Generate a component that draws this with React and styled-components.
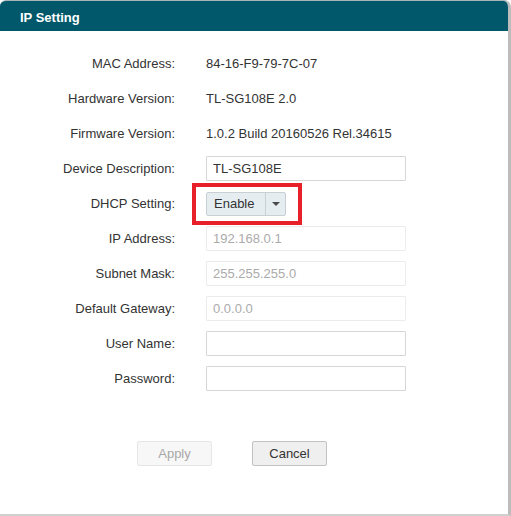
import React from "react";
import styled, { createGlobalStyle } from "styled-components";

const GlobalStyle = createGlobalStyle`
  body {
    margin: 0;
    background: #ffffff;
    font-family: "Liberation Sans", Arial, sans-serif;
  }
`;

const Dialog = styled.div`
  width: 511px;
  height: 516px;
  box-sizing: border-box;
  background: #fff;
  border-top: 1px solid #a9b3b6;
  border-right: 3px solid #bcbcbc;
  border-bottom: 2px solid #cfcfcf;
  border-radius: 6px 7px 0 0;
  overflow: hidden;
`;

const Header = styled.div`
  height: 30px;
  box-sizing: border-box;
  padding: 3px 0 0 20px;
  line-height: 27px;
  background: #01586a;
  color: #fff;
  font-size: 13px;
  font-weight: bold;
`;

const Form = styled.div`
  display: grid;
  grid-template-columns: 175px 200px;
  grid-auto-rows: 35px;
  column-gap: 31px;
  padding-top: 15px;
  align-items: center;
`;

const Label = styled.div`
  text-align: right;
  font-size: 13px;
  color: #333;
`;

const Value = styled.div`
  font-size: 13px;
  color: #333;
`;

const Input = styled.input`
  box-sizing: border-box;
  width: 200px;
  height: 25px;
  padding: 0 6px;
  border: 1px solid ${(p) => (p.disabled ? "#ececec" : "#d6d6d6")};
  border-radius: 1px;
  background: #fff;
  font-family: "Liberation Sans", Arial, sans-serif;
  font-size: 13px;
  color: ${(p) => (p.disabled ? "#ababab" : "#333")};
  outline: none;
`;

const SelectWrap = styled.div`
  position: relative;
  width: 80px;
`;

const Select = styled.div`
  display: flex;
  box-sizing: border-box;
  width: 80px;
  height: 24px;
  border: 1px solid #c8d0d6;
  border-radius: 2px;
  background: #e6edf1;
  font-size: 13px;
  color: #333;
`;

const SelectText = styled.div`
  width: 59px;
  padding-left: 7px;
  box-sizing: border-box;
  line-height: 22px;
  border-right: 1px solid #c8d0d6;
`;

const Arrow = styled.div`
  flex: 1;
  display: flex;
  align-items: center;
  justify-content: center;
  &::after {
    content: "";
    border-left: 4px solid transparent;
    border-right: 4px solid transparent;
    border-top: 4px solid #4a4a4a;
  }
`;

const Highlight = styled.div`
  position: absolute;
  left: -14px;
  top: -9px;
  width: 110px;
  height: 42px;
  box-sizing: border-box;
  border: 4px solid #e8202a;
  pointer-events: none;
`;

const Buttons = styled.div`
  display: flex;
  gap: 40px;
  padding: 45px 0 0 137px;
`;

const Button = styled.button`
  width: 75px;
  height: 25px;
  box-sizing: border-box;
  border-radius: 2px;
  border: 1px solid ${(p) => (p.disabled ? "#e6e6e6" : "#c2c2c2")};
  background: ${(p) => (p.disabled ? "#f7f7f7" : "#efefef")};
  color: ${(p) => (p.disabled ? "#a8a8a8" : "#333")};
  font-family: "Liberation Sans", Arial, sans-serif;
  font-size: 13px;
  padding: 0;
`;

const rows = [
  ["MAC Address:", "84-16-F9-79-7C-07"],
  ["Hardware Version:", "TL-SG108E 2.0"],
  ["Firmware Version:", "1.0.2 Build 20160526 Rel.34615"],
];

export default function App() {
  return (
    <>
      <GlobalStyle />
      <Dialog>
        <Header>IP Setting</Header>
        <Form>
          {rows.map(([label, value]) => (
            <React.Fragment key={label}>
              <Label>{label}</Label>
              <Value>{value}</Value>
            </React.Fragment>
          ))}
          <Label>Device Description:</Label>
          <Input defaultValue="TL-SG108E" />
          <Label>DHCP Setting:</Label>
          <SelectWrap>
            <Select>
              <SelectText>Enable</SelectText>
              <Arrow />
            </Select>
            <Highlight />
          </SelectWrap>
          <Label>IP Address:</Label>
          <Input disabled defaultValue="192.168.0.1" />
          <Label>Subnet Mask:</Label>
          <Input disabled defaultValue="255.255.255.0" />
          <Label>Default Gateway:</Label>
          <Input disabled defaultValue="0.0.0.0" />
          <Label>User Name:</Label>
          <Input />
          <Label>Password:</Label>
          <Input type="password" />
        </Form>
        <Buttons>
          <Button disabled>Apply</Button>
          <Button>Cancel</Button>
        </Buttons>
      </Dialog>
    </>
  );
}
